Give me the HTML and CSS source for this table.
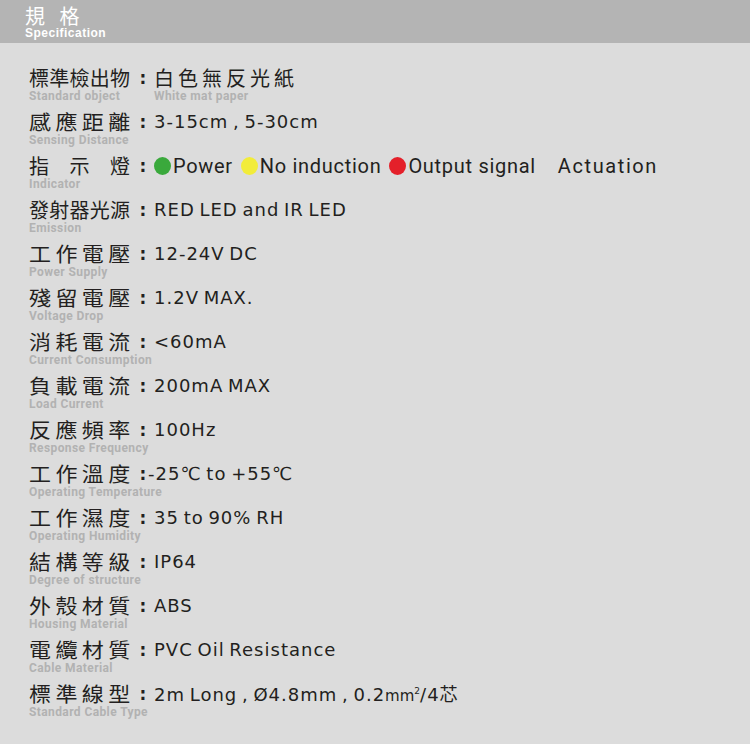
FILE: index.html
```html
<!DOCTYPE html>
<html lang="zh-Hant">
<head>
    <meta charset="UTF-8">
    <meta name="viewport" content="width=device-width, initial-scale=1.0">
    <title>規格 Specification</title>
    <link rel="stylesheet" href="styles.css">
</head>
<body>
    <header class="spec-header">
        <div class="spec-title">規 格</div>
        <div class="spec-sub">Specification</div>
    </header>

    <div class="spec-list">
        <div class="spec-row">
            <div class="spec-line"><span class="label">標準檢出物</span><span class="colon">:</span><span class="value cn">白色無反光紙</span></div>
            <div class="en-line"><span class="en en-key">Standard object</span><span class="en">White mat paper</span></div>
        </div>
        <div class="spec-row">
            <div class="spec-line"><span class="label wide">感應距離</span><span class="colon">:</span><span class="value">3-15cm , 5-30cm</span></div>
            <div class="en-line"><span class="en">Sensing Distance</span></div>
        </div>
        <div class="spec-row">
            <div class="spec-line"><span class="label">指示燈</span><span class="colon">:</span><span class="value indicator"><i class="dot green"></i>Power <i class="dot yellow"></i>No induction <i class="dot red"></i>Output signal<span class="actuation">Actuation</span></span></div>
            <div class="en-line"><span class="en">Indicator</span></div>
        </div>
        <div class="spec-row">
            <div class="spec-line"><span class="label">發射器光源</span><span class="colon">:</span><span class="value">RED LED and IR LED</span></div>
            <div class="en-line"><span class="en">Emission</span></div>
        </div>
        <div class="spec-row">
            <div class="spec-line"><span class="label wide">工作電壓</span><span class="colon">:</span><span class="value">12-24V DC</span></div>
            <div class="en-line"><span class="en">Power Supply</span></div>
        </div>
        <div class="spec-row">
            <div class="spec-line"><span class="label wide">殘留電壓</span><span class="colon">:</span><span class="value">1.2V MAX.</span></div>
            <div class="en-line"><span class="en">Voltage Drop</span></div>
        </div>
        <div class="spec-row">
            <div class="spec-line"><span class="label wide">消耗電流</span><span class="colon">:</span><span class="value">&lt;60mA</span></div>
            <div class="en-line"><span class="en">Current Consumption</span></div>
        </div>
        <div class="spec-row">
            <div class="spec-line"><span class="label wide">負載電流</span><span class="colon">:</span><span class="value">200mA MAX</span></div>
            <div class="en-line"><span class="en">Load Current</span></div>
        </div>
        <div class="spec-row">
            <div class="spec-line"><span class="label wide">反應頻率</span><span class="colon">:</span><span class="value">100Hz</span></div>
            <div class="en-line"><span class="en">Response Frequency</span></div>
        </div>
        <div class="spec-row">
            <div class="spec-line"><span class="label wide">工作溫度</span><span class="colon">:</span><span class="value tight">-25℃ to +55℃</span></div>
            <div class="en-line"><span class="en">Operating Temperature</span></div>
        </div>
        <div class="spec-row">
            <div class="spec-line"><span class="label wide">工作濕度</span><span class="colon">:</span><span class="value">35 to 90% RH</span></div>
            <div class="en-line"><span class="en">Operating Humidity</span></div>
        </div>
        <div class="spec-row">
            <div class="spec-line"><span class="label wide">結構等級</span><span class="colon">:</span><span class="value">IP64</span></div>
            <div class="en-line"><span class="en">Degree of structure</span></div>
        </div>
        <div class="spec-row">
            <div class="spec-line"><span class="label wide">外殼材質</span><span class="colon">:</span><span class="value">ABS</span></div>
            <div class="en-line"><span class="en">Housing Material</span></div>
        </div>
        <div class="spec-row">
            <div class="spec-line"><span class="label wide">電纜材質</span><span class="colon">:</span><span class="value">PVC Oil Resistance</span></div>
            <div class="en-line"><span class="en">Cable Material</span></div>
        </div>
        <div class="spec-row">
            <div class="spec-line"><span class="label wide">標準線型</span><span class="colon">:</span><span class="value">2m Long , Ø4.8mm , 0.2<span class="mm">mm<sup>2</sup></span>/4<span class="cn">芯</span></span></div>
            <div class="en-line"><span class="en">Standard Cable Type</span></div>
        </div>
    </div>
</body>
</html>
```

FILE: styles.css
```css
body {
    margin: 0;
    padding: 0;
    background-color: #dcdcdc;
    font-family: 'Noto Sans CJK TC', sans-serif;
    color: #231f20;
}
.spec-header {
    background: #b4b4b4;
    height: 43px;
    padding-left: 25px;
    box-sizing: border-box;
    padding-top: 4px;
    color: #ffffff;
}
.spec-title {
    font-size: 20px;
    line-height: 23px;
    letter-spacing: 5px;
}
.spec-sub {
    font-family: 'Liberation Sans', Arial, sans-serif;
    font-weight: bold;
    font-size: 12px;
    line-height: 13px;
    letter-spacing: 0.5px;
}
.spec-list {
    padding: 23px 0 0 29px;
}
.spec-row {
    margin-bottom: 7px;
}
.spec-line {
    display: flex;
    align-items: center;
    height: 24px;
    white-space: nowrap;
}
.label {
    display: inline-block;
    width: 101px;
    font-size: 20px;
    line-height: 24px;
    text-align: justify;
    text-align-last: justify;
}
.label.wide {
    width: 92px;
    margin-right: 9px;
    transform: scaleX(1.1);
    transform-origin: left center;
}
.colon {
    width: 22px;
    text-align: center;
    font-family: 'DejaVu Sans', sans-serif;
    font-weight: bold;
    font-size: 17px;
    margin-left: 2px;
}
.value {
    font-family: 'DejaVu Sans', sans-serif;
    font-size: 18px;
    line-height: 24px;
    letter-spacing: 1px;
    word-spacing: -2px;
}
.value.tight {
    margin-left: -6px;
}
.value.cn, .value .cn {
    font-family: 'Noto Sans CJK TC', sans-serif;
}
.value.cn {
    font-size: 20px;
    letter-spacing: 4px;
}
.mm {
    font-size: 15px;
    letter-spacing: 0;
}
.mm sup {
    font-size: 9px;
    vertical-align: 7px;
    line-height: 0;
}
.indicator {
    font-family: 'Roboto', 'Noto Sans', sans-serif;
    font-size: 20px;
    letter-spacing: 0.7px;
    word-spacing: 0;
    display: flex;
    align-items: center;
}
.dot {
    display: inline-block;
    width: 17px;
    height: 18px;
    border-radius: 50%;
    margin-right: 2px;
}
.dot.green {
    background: #3aa93c;
}
.dot.yellow {
    background: #f2ec3a;
    margin-left: 8px;
}
.dot.red {
    background: #e4202a;
    margin-left: 8px;
}
.actuation {
    margin-left: 22px;
    letter-spacing: 1.6px;
}
.en-line {
    display: flex;
    height: 13px;
}
.en {
    font-family: 'Roboto', 'Liberation Sans', sans-serif;
    font-weight: bold;
    font-size: 12px;
    line-height: 13px;
    letter-spacing: 0.4px;
    color: #b2b2b2;
}
.en-key {
    width: 125px;
}
```
